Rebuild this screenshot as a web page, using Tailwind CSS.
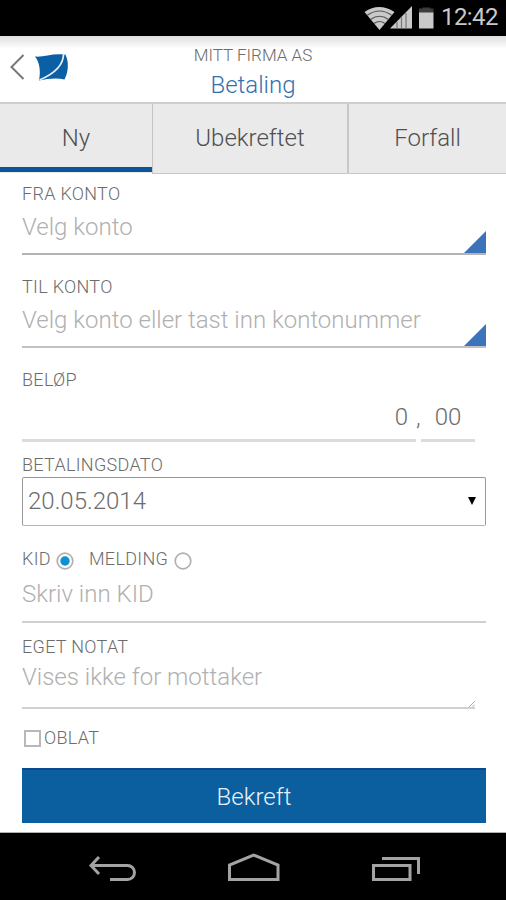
<!DOCTYPE html>
<html lang="no">
<head>
<meta charset="utf-8">
<title>Betaling</title>
<script src="https://cdn.jsdelivr.net/npm/@tailwindcss/browser@4"></script>
</head>
<body class="w-[506px] h-[900px] overflow-hidden bg-white font-[Roboto,sans-serif] font-light text-[#6c6c6c]">
<div class="flex flex-col h-[900px]">
  <!-- Status bar -->
  <div class="h-9 shrink-0 bg-black flex items-start text-[#c9c9c9]">
    <svg class="ml-[364px] mt-[5px]" width="70" height="26" viewBox="0 0 70 26">
      <path d="M0.5 7 Q15 -3 30.500 7 L15.500 25 Z" fill="#c9c9c9"/>
      <g fill="none" stroke="#555" stroke-width="1.200"><path d="M3 10.500 Q15.500 1.500 28 10.500"/><path d="M6.500 14.500 Q15.500 8 24.500 14.500"/><path d="M10 18.500 Q15.500 14.500 21 18.500"/></g>
      <path d="M26 23.500 L48 1 V23.500Z" fill="#c9c9c9"/>
      <path d="M33 17V23.500M37.500 12.500V23.500M42 8V23.500" stroke="#777" stroke-width="1.200"/>
      <path d="M55 8V3.500H58.500V2.500H66V3.500H69.500V8Z" fill="#3c3c3c"/>
      <path d="M55 7.500H69.500V23.500H55Z" fill="#c9c9c9"/>
    </svg>
    <div class="ml-[7px] leading-[34px] text-[24px] font-normal whitespace-nowrap tracking-[-0.6px]">12:42</div>
  </div>
  <!-- Header -->
  <header class="h-[66px] shrink-0 grid grid-cols-[80px_1fr_80px] bg-linear-to-b from-[#dfdfdf] via-white via-20% to-white">
    <div class="flex pt-[17px] pl-[10px] gap-[9px]">
      <svg width="16" height="28" viewBox="0 0 16 28"><path d="M13.500 2 L1.500 14 L13.500 26" fill="none" stroke="#777" stroke-width="2"/></svg>
      <svg width="34" height="28" viewBox="0 0 34 28">
        <path d="M0 3.500 C8 4.500 18 0 30.500 1.800 C34 9 33.500 19 29.500 26.500 C22 24.500 13 25.500 4 27.500 C6 18 4.500 9 0 3.500Z" fill="#0b5fa5"/>
        <path d="M28.500 1 C28.500 12 21 20 4.500 27" fill="none" stroke="#e6f0f8" stroke-width="1.700"/>
      </svg>
    </div>
    <div class="flex flex-col items-center pt-[8px]">
      <div class="h-[23px] leading-[23px] text-[17px]">MITT FIRMA AS</div>
      <h1 class="h-[36px] leading-[36px] text-[24px] text-[#3570ad]">Betaling</h1>
    </div>
  </header>
  <!-- Tabs -->
  <nav class="h-[71px] shrink-0 grid grid-cols-[153px_196px_1fr] bg-[#eaeaea] border-t-2 border-[#cfcfcf] text-[24px] leading-[69px] text-center text-[#505050]">
    <div class="flex flex-col border-r border-r-[#c4c4c4]"><span class="h-[63px]">Ny</span><span class="h-[5px] bg-[#0b559d]"></span></div>
    <div class="border-r-2 border-r-[#c8c8c8] border-b border-b-[#c8c8c8]">Ubekreftet</div>
    <div class="border-b border-b-[#c8c8c8]">Forfall</div>
  </nav>
  <!-- Form -->
  <form class="flex-1 pl-[22px] pr-5 pt-[9px] text-[18px] leading-6 tracking-[0.3px]">
    <div>
      <div class="h-6">FRA KONTO</div>
      <div class="h-[49px] border-b-2 border-[#b4b4b4] flex justify-between items-end">
        <div class="self-start leading-[43px] text-[24px] tracking-normal text-[#b0b0b0]">Velg konto</div>
        <svg width="22" height="22"><path d="M22 0V22H0Z" fill="#3b74bb"/></svg>
      </div>
    </div>
    <div class="mt-5">
      <div class="h-6">TIL KONTO</div>
      <div class="h-[49px] border-b-2 border-[#c2c2c2] flex justify-between items-end">
        <div class="self-start leading-[43px] text-[24px] tracking-normal text-[#b0b0b0]">Velg konto eller tast inn kontonummer</div>
        <svg width="22" height="22"><path d="M22 0V22H0Z" fill="#3b74bb"/></svg>
      </div>
    </div>
    <div class="mt-5">
      <div class="h-6">BELØP</div>
      <div class="flex h-[50px] text-[24px] leading-[50px] tracking-normal">
        <div class="w-[394px] border-b-3 border-[#dcdcdc] text-right pr-2">0</div>
        <div class="w-[5px]">,</div>
        <div class="w-[54px] border-b-3 border-[#dcdcdc] text-center">00</div>
      </div>
    </div>
    <div class="mt-[11px]">
      <div class="h-6">BETALINGSDATO</div>
      <div class="h-[49px] border border-[#999] border-b-[#b5b5b5] rounded-[2px] flex items-center justify-between pl-[5px] pr-[9px]">
        <div class="text-[24px] leading-[47px] tracking-normal">20.05.2014</div>
        <svg class="mb-[2px]" width="8" height="8"><path d="M0 0H8L4 8Z" fill="#000"/></svg>
      </div>
    </div>
    <div class="mt-[21px]">
      <div class="h-6 flex items-center">
        <span class="w-[28px]">KID</span>
        <svg class="ml-[6px] mt-[3px]" width="18" height="18"><circle cx="9" cy="9" r="7.800" fill="#fff" stroke="#b0b0b0" stroke-width="1.700"/><circle cx="9" cy="9" r="4.700" fill="#0d92cf"/></svg>
        <span class="ml-[15px] w-[78px]">MELDING</span>
        <svg class="ml-[7px] mt-[3px]" width="18" height="18"><circle cx="9" cy="9" r="7.800" fill="#fff" stroke="#b0b0b0" stroke-width="1.700"/></svg>
      </div>
      <div class="h-[52px] border-b-2 border-[#d0d0d0] leading-[47px] text-[24px] tracking-normal text-[#b0b0b0]">Skriv inn KID</div>
    </div>
    <div class="mt-3">
      <div class="h-6">EGET NOTAT</div>
      <div class="h-[50px] w-[453px] border-b-2 border-[#d0d0d0] flex justify-between items-end">
        <div class="self-start leading-[37px] text-[24px] tracking-normal text-[#b0b0b0]">Vises ikke for mottaker</div>
        <svg width="7" height="7"><path d="M1 7L7 1M4.500 7L7 4.500" stroke="#aaa"/></svg>
      </div>
    </div>
    <div class="mt-[17px] h-6 flex items-center pl-[2px] gap-[3px]">
      <div class="size-[17px] border-2 border-[#b8b8b8]"></div>
      <span>OBLAT</span>
    </div>
    <div class="mt-[18px] h-[55px] bg-[#0b5f9f] border-t-2 border-[#0a4890] text-center text-[24px] tracking-normal leading-[54px] text-[#e8f1fa]">Bekreft</div>
  </form>
  <!-- Navigation bar -->
  <div class="h-[68px] shrink-0 bg-black border-t border-[#b0b0b0] flex">
    <svg width="506" height="67" viewBox="0 833 506 67" fill="none" stroke="#a3a3a3" stroke-width="3">
      <path d="M99 857L91 865.500L99 874M91 865.500H127.500A7 7 0 0 1 127.500 879.500H110"/>
      <path d="M229.500 879.500V865L253.500 855L278 865V879.500Z"/>
      <path d="M373.500 865.500H410V879.500H373.500ZM382 858.500H418.500V874"/>
    </svg>
  </div>
</div>
</body>
</html>
